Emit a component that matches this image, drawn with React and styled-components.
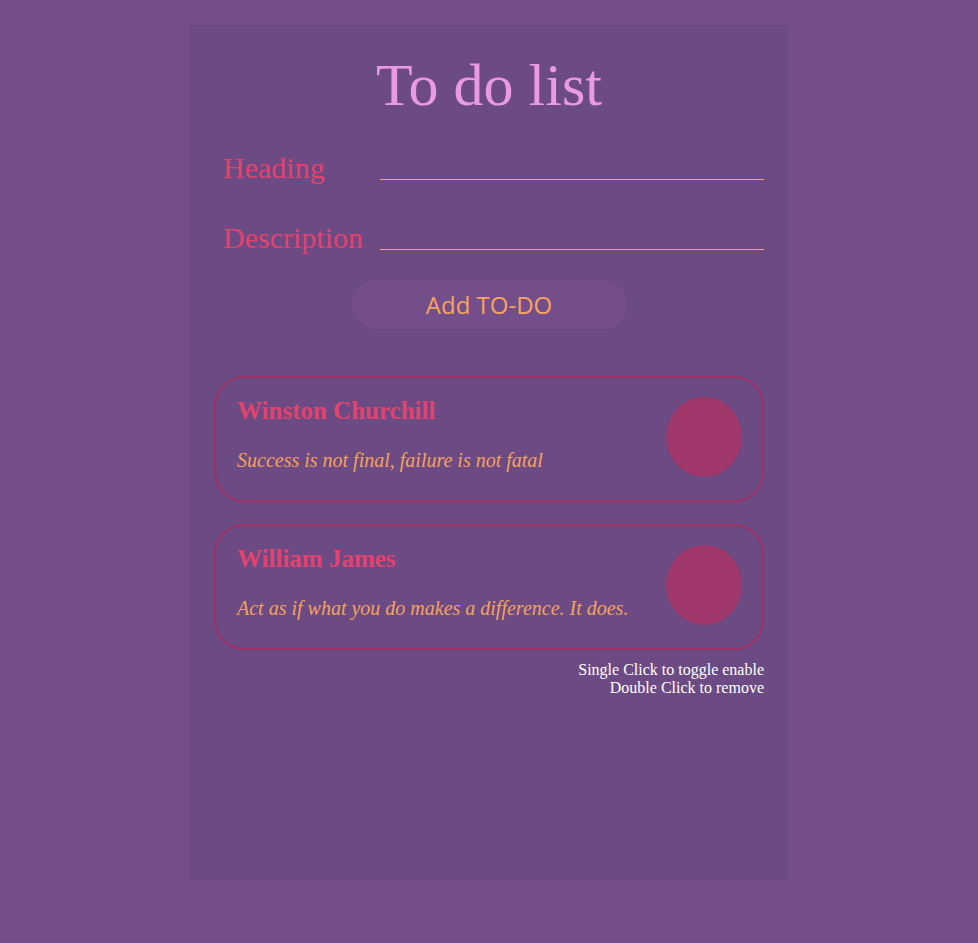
import React from "react";
import styled, { createGlobalStyle } from "styled-components";

const Global = createGlobalStyle`
  html, body {
    margin: 0;
    padding: 0;
    background: #744e8a;
    min-height: 100%;
  }
  body {
    font-family: "Liberation Serif", "Times New Roman", serif;
  }
  * { box-sizing: border-box; }
`;

const Page = styled.div`
  padding-top: 25px;
  min-height: 943px;
`;

const Panel = styled.main`
  width: 598px;
  height: 855px;
  margin: 0 auto;
  background: #6c4a84;
  padding: 27px 24px 0;
  display: flex;
  flex-direction: column;
`;

const Title = styled.h1`
  margin: 0;
  font-family: "Liberation Serif", serif;
  font-weight: 400;
  font-size: 60px;
  line-height: 66px;
  text-align: center;
  color: #ea9ae2;
`;

const Form = styled.form`
  display: flex;
  flex-direction: column;
  gap: 36px;
  margin-top: 33px;
  padding-left: 9px;
`;

const Row = styled.label`
  display: flex;
  align-items: flex-end;
  height: 34px;
`;

const LabelText = styled.span`
  width: 157px;
  flex: none;
  font-size: 30px;
  line-height: 34px;
  color: #e2436e;
`;

const Field = styled.input`
  flex: 1;
  height: 28px;
  margin-bottom: 5px;
  border: none;
  border-bottom: 1px solid #f2a27c;
  background: transparent;
  outline: none;
  color: #f2a27c;
  font-family: "Liberation Serif", serif;
  font-size: 20px;
  padding: 0;
`;

const AddButton = styled.button`
  align-self: center;
  margin-top: 25px;
  width: 275px;
  height: 49px;
  border: none;
  border-radius: 25px;
  background: #744e8a;
  color: #f7a45c;
  font-family: "Open Sans", "Noto Sans", sans-serif;
  font-size: 24px;
  cursor: pointer;
`;

const List = styled.ul`
  list-style: none;
  margin: 47px 0 0;
  padding: 0;
  display: flex;
  flex-direction: column;
  gap: 22px;
`;

const Card = styled.li`
  height: 126px;
  border: 2px solid #9c3166;
  border-radius: 30px;
  display: flex;
  align-items: center;
  justify-content: space-between;
  padding: 0 20px 0 21px;
`;

const CardText = styled.div`
  display: flex;
  flex-direction: column;
  gap: 23px;
  padding-bottom: 9px;
`;

const CardTitle = styled.h3`
  margin: 0;
  font-size: 25px;
  line-height: 28px;
  font-weight: 700;
  color: #e2436e;
`;

const CardDesc = styled.p`
  margin: 0;
  font-size: 20px;
  line-height: 24px;
  font-style: italic;
  color: #f5a25c;
`;

const Toggle = styled.span`
  flex: none;
  width: 76px;
  height: 80px;
  margin-bottom: 4px;
  border-radius: 50%;
  background: ${(p) => (p.$on ? "#a0386b" : "transparent")};
`;

const Hint = styled.p`
  margin: 11px 0 0;
  text-align: right;
  color: #ffffff;
  font-size: 16px;
  line-height: 18px;
`;

const todos = [
  { title: "Winston Churchill", desc: "Success is not final, failure is not fatal" },
  { title: "William James", desc: "Act as if what you do makes a difference. It does." },
];

export default function App() {
  return (
    <Page>
      <Global />
      <Panel>
        <Title>To do list</Title>
        <Form onSubmit={(e) => e.preventDefault()}>
          <Row>
            <LabelText>Heading</LabelText>
            <Field type="text" />
          </Row>
          <Row>
            <LabelText>Description</LabelText>
            <Field type="text" />
          </Row>
        </Form>
        <AddButton type="button">Add TO-DO</AddButton>
        <List>
          {todos.map((t) => (
            <Card key={t.title}>
              <CardText>
                <CardTitle>{t.title}</CardTitle>
                <CardDesc>{t.desc}</CardDesc>
              </CardText>
              <Toggle $on />
            </Card>
          ))}
        </List>
        <Hint>
          Single Click to toggle enable
          <br />
          Double Click to remove
        </Hint>
      </Panel>
    </Page>
  );
}
